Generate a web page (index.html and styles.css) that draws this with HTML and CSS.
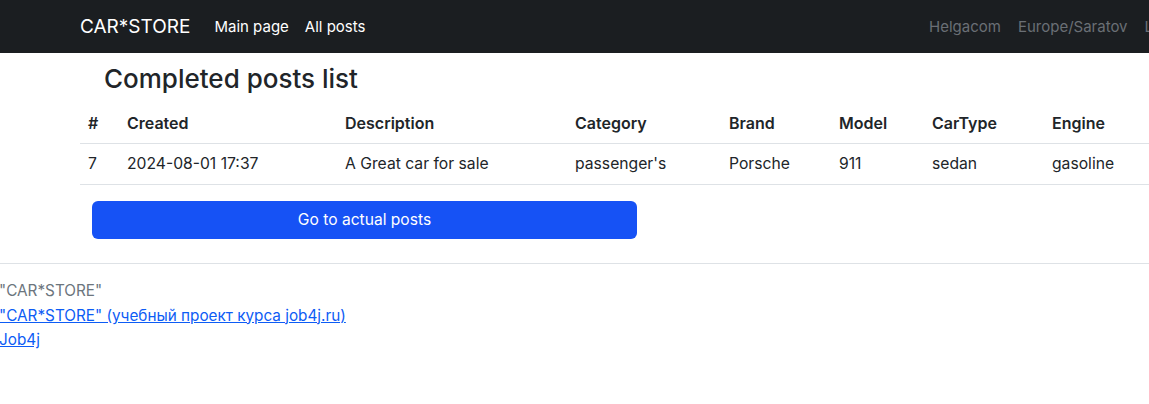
FILE: index.html
```html
<!DOCTYPE html>
<html lang="en">
<head>
<meta charset="utf-8">
<title>Completed posts list</title>
<link rel="stylesheet" href="styles.css">
</head>
<body>
<nav class="navbar">
  <a class="brand" href="#">CAR*STORE</a>
  <div class="nav-main">
    <a class="nav-link" href="#">Main page</a>
    <a class="nav-link" href="#">All posts</a>
  </div>
  <div class="nav-right">
    <a class="nav-link muted" href="#">Helgacom</a>
    <a class="nav-link muted" href="#">Europe/Saratov</a>
    <a class="nav-link muted" href="#">Logout</a>
  </div>
</nav>
<main class="content">
  <h2 class="title">Completed posts list</h2>
  <table class="posts">
    <colgroup>
      <col class="c-id"><col class="c-created"><col class="c-desc"><col class="c-cat">
      <col class="c-brand"><col class="c-model"><col class="c-type"><col class="c-engine">
    </colgroup>
    <thead>
      <tr><th>#</th><th>Created</th><th>Description</th><th>Category</th><th>Brand</th><th>Model</th><th>CarType</th><th>Engine</th></tr>
    </thead>
    <tbody>
      <tr><td>7</td><td>2024-08-01 17:37</td><td>A Great car for sale</td><td>passenger's</td><td>Porsche</td><td>911</td><td>sedan</td><td>gasoline</td></tr>
    </tbody>
  </table>
  <div class="actions">
    <a class="btn" href="#">Go to actual posts</a>
  </div>
</main>
<footer class="footer">
  <div class="muted-text">"CAR*STORE"</div>
  <div><a href="#">"CAR*STORE" (учебный проект курса job4j.ru)</a></div>
  <div><a href="#">Job4j</a></div>
</footer>
</body>
</html>
```
FILE: styles.css
```css
html, body {
  margin: 0;
  padding: 0;
  overflow: hidden;
}
body {
  font-family: Inter, "Noto Sans", "Liberation Sans", sans-serif;
  font-size: 16px;
  line-height: 24px;
  color: #212529;
  background: #fff;
}
a { text-decoration: none; }

.navbar {
  height: 53px;
  background: #1b1e21;
  display: flex;
  align-items: center;
  padding-left: 80px;
  white-space: nowrap;
}
.brand {
  color: #fff;
  font-size: 19px;
  line-height: 28px;
  margin-right: 24px;
}
.nav-main {
  display: flex;
  gap: 16px;
}
.nav-link {
  color: #fff;
  font-size: 15px;
}
.nav-right {
  margin-left: auto;
  display: flex;
  gap: 17px;
  margin-right: -45px;
}
.nav-link.muted {
  color: #6a6f75;
}

.content {
  padding-left: 80px;
}
.title {
  margin: 10px 0 0 24px;
  font-size: 26px;
  line-height: 32px;
  font-weight: 500;
}
.posts {
  width: 100%;
  border-collapse: collapse;
  margin-top: 8px;
  table-layout: fixed;
}
.c-id { width: 39px; }
.c-created { width: 218px; }
.c-desc { width: 230px; }
.c-cat { width: 154px; }
.c-brand { width: 110px; }
.c-model { width: 93px; }
.c-type { width: 120px; }
.posts th, .posts td {
  text-align: left;
  padding: 8px;
  font-size: 15.7px;
  border-bottom: 1px solid #dee2e6;
  white-space: nowrap;
}
.posts th {
  font-weight: 600;
  font-size: 16px;
}
.actions {
  padding: 16px 12px 0;
}
.btn {
  display: flex;
  justify-content: center;
  align-items: center;
  width: 545px;
  height: 38px;
  border-radius: 6px;
  background: #1652f5;
  color: #fff;
  font-size: 15.6px;
}

.footer {
  margin-top: 24px;
  border-top: 1px solid #dee2e6;
  padding-top: 15px;
  margin-left: -1px;
  font-size: 15.3px;
}
.footer div { line-height: 24.5px; }
.muted-text { color: #6c757d; }
.footer a {
  color: #0d5cf5;
  text-decoration: underline;
}
```
